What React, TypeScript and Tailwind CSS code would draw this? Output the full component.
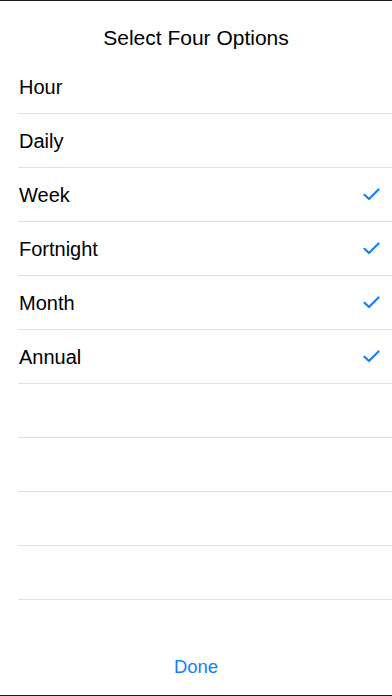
import React from "react";

const items: { label: string; checked: boolean }[] = [
  { label: "Hour", checked: false },
  { label: "Daily", checked: false },
  { label: "Week", checked: true },
  { label: "Fortnight", checked: true },
  { label: "Month", checked: true },
  { label: "Annual", checked: true },
  { label: "", checked: false },
  { label: "", checked: false },
  { label: "", checked: false },
  { label: "", checked: false },
];

function Check() {
  return (
    <svg width="17" height="13" viewBox="0 0 17 13" fill="none">
      <path d="M1.5 6.8 L6 11 L15.5 1.5" stroke="#157efb" strokeWidth="2.2" strokeLinecap="round" strokeLinejoin="round" />
    </svg>
  );
}

export default function App() {
  return (
    <div
      className="h-[696px] w-[392px] bg-white flex flex-col border-t border-b border-[#1a1a1a] overflow-hidden"
      style={{ fontFamily: '"Liberation Sans", Arial, sans-serif' }}
    >
      <div className="h-[59px] flex items-center justify-center text-[21px] text-black pt-[15px]">
        Select Four Options
      </div>
      <div className="flex flex-col">
        {items.map((it, i) => (
          <div key={i} className="ml-[18px] h-[54px] flex items-center justify-between border-b border-[#e0e0e0] pr-[12px]">
            <span className="pl-px text-[20px] text-black">{it.label}</span>
            {it.checked && <Check />}
          </div>
        ))}
      </div>
      <div className="flex-1" />
      <div className="h-[56px] flex items-center justify-center text-[18.5px] text-[#157efb]">Done</div>
    </div>
  );
}
